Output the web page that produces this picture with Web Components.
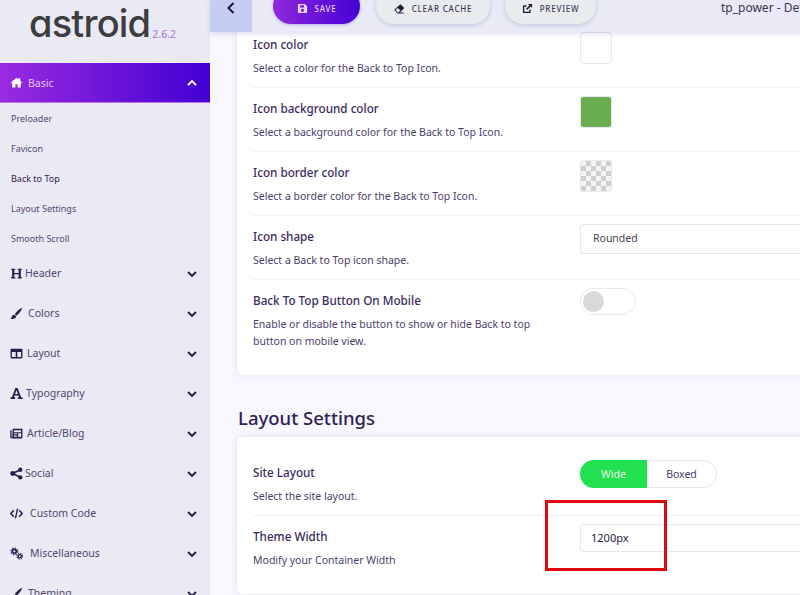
<!DOCTYPE html>
<html>
<head>
<meta charset="utf-8">
<title>astroid</title>
<style>
  html, body { margin: 0; height: 100%; overflow: hidden; }
  body { font-family: "Noto Sans", "Open Sans", sans-serif; color: #3a2a5c; }
</style>
</head>
<body>
<astroid-app>
  <side-nav slot="side">
    <nav-item icon="home" gap="5" active open>Basic</nav-item>
    <sub-item>Preloader</sub-item>
    <sub-item>Favicon</sub-item>
    <sub-item current>Back to Top</sub-item>
    <sub-item>Layout Settings</sub-item>
    <sub-item>Smooth Scroll</sub-item>
    <nav-item icon="heading" gap="2">Header</nav-item>
    <nav-item icon="brush" gap="5">Colors</nav-item>
    <nav-item icon="columns" gap="4">Layout</nav-item>
    <nav-item icon="font" gap="3">Typography</nav-item>
    <nav-item icon="news" gap="4">Article/Blog</nav-item>
    <nav-item icon="share" gap="2">Social</nav-item>
    <nav-item icon="code" gap="7">Custom Code</nav-item>
    <nav-item icon="cogs" gap="7">Miscellaneous</nav-item>
    <nav-item icon="brush" gap="5">Theming</nav-item>
  </side-nav>
  <top-bar slot="top">
    <tool-button icon="save" primary style="width:87px">SAVE</tool-button>
    <tool-button icon="eraser" style="width:114px;margin-left:16px">CLEAR CACHE</tool-button>
    <tool-button icon="external" style="width:91px;margin-left:15px">PREVIEW</tool-button>
    <span slot="title">tp_power - Default</span>
  </top-bar>
  <settings-card style="margin-top:-23px">
    <setting-row label="Icon color" desc="Select a color for the Back to Top Icon."><color-swatch color="#fff"></color-swatch></setting-row>
    <setting-row label="Icon background color" desc="Select a background color for the Back to Top Icon."><color-swatch color="#68ad4e"></color-swatch></setting-row>
    <setting-row label="Icon border color" desc="Select a border color for the Back to Top Icon."><color-swatch></color-swatch></setting-row>
    <setting-row label="Icon shape" desc="Select a Back to Top icon shape."><text-field h="30">Rounded</text-field></setting-row>
    <setting-row last label="Back To Top Button On Mobile" desc="Enable or disable the button to show or hide Back to top button on mobile view."><toggle-switch></toggle-switch></setting-row>
  </settings-card>
  <settings-card heading="Layout Settings" style="margin-top:30px">
    <setting-row label="Site Layout" desc="Select the site layout."><segment-pick></segment-pick></setting-row>
    <setting-row last label="Theme Width" desc="Modify your Container Width"><text-field h="28" dark>1200px</text-field></setting-row>
  </settings-card>
  <mark-box></mark-box>
</astroid-app>

<script>
const ICONS = {
  home: '<path d="M12 3 1 12.500h3V21h6v-6h4v6h6v-8.500h3L19 9V4h-3v2.300z"/>',
  heading: '<path d="M2 3h8v2.300H8V11h8V5.300h-2V3h8v2.300h-2v13.400h2V21h-8v-2.300h2V13.500H8v5.200h2V21H2v-2.300h2V5.300H2z"/>',
  brush: '<path d="M23 1.500C18 3.500 12 8.500 8.800 13l3.400 3C16.500 12.500 21.500 6.500 23 1.500z"/><path d="M7.500 14.500c-2.800.2-4 2-4.300 4-.2 1.300-1 2-2.700 2.500 3 1.800 10.500 2 11-4.300z"/>',
  columns: '<path fill-rule="evenodd" d="M3 3h18a2 2 0 0 1 2 2v14a2 2 0 0 1-2 2H3a2 2 0 0 1-2-2V5a2 2 0 0 1 2-2zm.5 6v9.500h7V9zm10 0v9.500h7V9z"/>',
  font: '<path fill-rule="evenodd" d="M10 2h4l6.500 17H23v3h-8.500v-3h2.200l-1.100-3.300H8.400L7.300 19h2.200v3H1v-3h2.500zM9.400 12.800h5.200L12 5.800z"/>',
  news: '<path fill-rule="evenodd" d="M5 3h18v16a2 2 0 0 1-2 2H3a2.500 2.500 0 0 1-2.500-2.500V6H3v12.500a.7.7 0 0 0 1.400 0zm2.500 3v3.500h13V6zm0 5.500v1.800h5.500v-1.800zm7.500 0V18h5.500v-6.500zm-7.500 3.500V18h5.500v-1.800z"/>',
  share: '<circle cx="19" cy="5" r="4"/><circle cx="19" cy="19" r="4"/><circle cx="5" cy="12" r="4.500"/><path d="M5 12 19 5M5 12l14 7" stroke="currentColor" stroke-width="3"/>',
  code: '<path d="M7 6 1.500 12 7 18M17 6l5.500 6-5.500 6" fill="none" stroke="currentColor" stroke-width="2.800"/><path d="M14 3 10 21" fill="none" stroke="currentColor" stroke-width="2.500"/>',
  cogs: '<circle cx="8" cy="8" r="3.600" fill="none" stroke="currentColor" stroke-width="3"/><circle cx="8" cy="8" r="6.200" fill="none" stroke="currentColor" stroke-width="2.200" stroke-dasharray="2.500 2.370"/><circle cx="18" cy="17" r="3" fill="none" stroke="currentColor" stroke-width="2.600"/><circle cx="18" cy="17" r="5.300" fill="none" stroke="currentColor" stroke-width="2" stroke-dasharray="2.200 2"/>',
  save: '<path fill-rule="evenodd" d="M4 2h13l5 5v13a2 2 0 0 1-2 2H4a2 2 0 0 1-2-2V4a2 2 0 0 1 2-2zm2.500 3v5h9V5zM12 12.500a3.500 3.500 0 1 0 0 7 3.500 3.500 0 0 0 0-7z"/>',
  eraser: '<path d="M14 2.500 22.500 11 13 20.500H21V23H8L1.500 16.500a2 2 0 0 1 0-2.800zM7.500 11l-4 4.500L8 20.500h2l4-4.500z"/>',
  external: '<path d="M13 2h9v9l-3.200-3.200-7.300 7.300-2.600-2.600 7.300-7.300z"/><path d="M4 5h6v3H5v11h11v-5h3v6a2 2 0 0 1-2 2H4a2 2 0 0 1-2-2V7a2 2 0 0 1 2-2z"/>'
};

// small helper, every element just sets its shadow html once
class Base extends HTMLElement {
  connectedCallback() {
    if (this.shadowRoot) return;
    this.attachShadow({ mode: 'open' });
    this.shadowRoot.innerHTML = this.html();
  }
}

class UiIcon extends Base {
  html() {
    const size = this.getAttribute('size') || 13;
    return `<style>:host{display:inline-flex;color:inherit}svg{display:block;fill:currentColor}</style>
      <svg width="${size}" height="${size}" viewBox="0 0 24 24">${ICONS[this.getAttribute('name')] || ''}</svg>`;
  }
}

class AstroidApp extends Base {
  html() {
    return `<style>
      :host{display:grid;grid-template-columns:210px 1fr;grid-template-rows:32px 1fr;width:800px;height:595px;overflow:hidden;position:relative;background:#f9f7fe}
      .side{grid-row:1 / 3}
      .top{grid-column:2;z-index:2}
      .main{grid-column:2;padding:0 0 0 27px;width:600px;box-sizing:border-box}
      .scroll{width:700px}
    </style>
    <div class="side"><slot name="side"></slot></div>
    <div class="top"><slot name="top"></slot></div>
    <div class="main"><div class="scroll"><slot></slot></div></div>`;
  }
}

class SideNav extends Base {
  html() {
    return `<style>
      :host{display:block;height:595px;background:#e9eaf3;overflow:hidden}
      .logo{height:63px;box-sizing:border-box;padding:0 0 0 29px;display:flex;align-items:flex-start;overflow:hidden}
      .name{font:500 38px/46px Inter,"Noto Sans",sans-serif;font-feature-settings:"cv11";color:#3d3d3f;letter-spacing:-.8px}
      .ver{font:500 10.500px/12px "Noto Sans",sans-serif;color:#b07fe0;margin:28px 0 0 2px}
    </style>
    <div class="logo"><span class="name">astroid</span><span class="ver">2.6.2</span></div>
    <slot></slot>`;
  }
}

class NavItem extends Base {
  html() {
    const active = this.hasAttribute('active');
    const chev = this.hasAttribute('open') ? 'M2 8 6 4l4 4' : 'M2 4l4 4 4-4';
    return `<style>
      :host{display:flex;align-items:center;height:40px;box-sizing:border-box;padding:0 12px 0 10px;font-size:10.500px;color:#54466f;
        ${active ? 'background:linear-gradient(90deg,#9a2be0,#4200d2);color:#e3c6f7;border-bottom:1px solid #c070e6;' : ''}}
      .ic{color:${active ? '#fff' : '#2c1b4d'};display:flex;margin-right:${this.getAttribute('gap') || 5}px}
      .t{flex:1;margin-top:${active ? 0 : -1}px}
      svg{display:block;margin-top:1px}
    </style>
    <span class="ic"><ui-icon name="${this.getAttribute('icon')}" size="13"></ui-icon></span>
    <span class="t"><slot></slot></span>
    <svg width="12" height="12" viewBox="0 0 12 12" fill="none" stroke="${active ? '#fff' : '#2c1b4d'}" stroke-width="1.900"><path d="${chev}"/></svg>`;
  }
}

class SubItem extends Base {
  html() {
    const cur = this.hasAttribute('current');
    return `<style>:host{display:flex;align-items:center;height:30px;padding-left:11px;font-size:9px;color:${cur ? '#2f2347' : '#54466f'}}</style><slot></slot>`;
  }
}

class TopBar extends Base {
  html() {
    return `<style>
      :host{display:flex;align-items:flex-end;height:32px;background:#e9eaf5;box-shadow:0 2px 5px rgba(120,120,200,.22);overflow:hidden}
      .back{width:42px;height:32px;background:#c5cdf2;display:flex;align-items:flex-start;justify-content:center;align-self:flex-start;color:#1e1436}
      .back svg{margin-top:1px}
      .btns{display:flex;margin-left:21px;align-self:flex-start;margin-top:-12px}
      .title{margin-left:125px;align-self:flex-start;font-size:12px;line-height:16px;white-space:nowrap;color:#3a3450;flex:none}
    </style>
    <div class="back"><svg width="14" height="14" viewBox="0 0 14 14" fill="none" stroke="currentColor" stroke-width="2"><path d="M9.500 2 4.500 7l5 5"/></svg></div>
    <div class="btns"><slot></slot></div>
    <div class="title"><slot name="title"></slot></div>`;
  }
}

class ToolButton extends Base {
  html() {
    const p = this.hasAttribute('primary');
    return `<style>
      :host{display:flex;align-items:center;justify-content:center;height:36px;box-sizing:border-box;padding-top:4px;border-radius:18px;font-size:8px;letter-spacing:.8px;font-weight:500;
        ${p ? 'background:linear-gradient(90deg,#8f28dc,#4500d4);color:#e8d4fa;box-shadow:0 1px 3px rgba(80,20,200,.3);'
            : 'background:#e9ecef;color:#3f3a58;box-shadow:0 1px 4px rgba(110,110,170,.35);'}}
      .ic{display:flex;margin-right:7px;color:${p ? '#e8d4fa' : '#241a3c'}}
    </style>
    <span class="ic"><ui-icon name="${this.getAttribute('icon')}" size="11"></ui-icon></span><slot></slot>`;
  }
}

class SettingsCard extends Base {
  html() {
    const h = this.getAttribute('heading');
    return `<style>
      :host{display:block}
      h2{margin:0 0 6px 1px;font:500 18.500px/26px "Noto Sans",sans-serif;color:#2f1f55}
      .card{background:#fff;border-radius:5px;box-shadow:0 0 7px rgba(120,90,220,.16);padding:15px 16px 25px}
    </style>
    ${h ? `<h2>${h}</h2>` : ''}
    <div class="card"><slot></slot></div>`;
  }
}

class SettingRow extends Base {
  html() {
    const last = this.hasAttribute('last');
    return `<style>
      :host{display:grid;grid-template-columns:327px 1fr;box-sizing:border-box;${last ? '' : 'height:64px;border-bottom:1px solid #f1f0f6;'}}
      .txt{padding-top:8px}
      .l{font-size:11.700px;line-height:24px;font-weight:500;color:#3b2a5e}
      .d{font-size:10.500px;line-height:17px;margin-top:4px;color:#4b3d6b;max-width:290px}
      .c{padding-top:8px}
    </style>
    <div class="txt"><div class="l">${this.getAttribute('label')}</div><div class="d">${this.getAttribute('desc')}</div></div>
    <div class="c"><slot></slot></div>`;
  }
}

class ColorSwatch extends Base {
  html() {
    const c = this.getAttribute('color');
    const bg = c ? `background:${c}` : 'background:repeating-conic-gradient(#cfcfcf 0 25%,#f4f4f4 0 50%) 0 0/10px 10px';
    return `<style>:host{display:block;width:32px;height:32px;box-sizing:border-box;border:1px solid #e8e8ee;border-radius:3px;${bg}}</style>`;
  }
}

class TextField extends Base {
  html() {
    const dark = this.hasAttribute('dark');
    return `<style>:host{display:flex;align-items:center;width:300px;height:${this.getAttribute('h')}px;box-sizing:border-box;border:1px solid #e6e6ec;border-radius:3px;padding:0 0 2px ${dark ? 10 : 12}px;font-size:${dark ? 11 : 10.5}px;background:#fff;color:${dark ? '#26213a' : '#46424f'}}</style><slot></slot>`;
  }
}

class ToggleSwitch extends Base {
  html() {
    return `<style>
      :host{display:block;width:56px;height:27px;box-sizing:border-box;border:1px solid #e9e9ee;border-radius:14px;background:#fff;padding:2px}
      i{display:block;width:21px;height:21px;border-radius:50%;background:#d9d9dc}
    </style><i></i>`;
  }
}

class SegmentPick extends Base {
  html() {
    return `<style>
      :host{display:flex;width:137px;height:28px;font-size:10.500px}
      span{display:flex;align-items:center;justify-content:center;box-sizing:border-box}
      .on{width:67px;background:#22e04f;color:#e8fbe9;border-radius:14px 0 0 14px}
      .off{width:70px;border:1px solid #e6e6ec;border-left:0;border-radius:0 14px 14px 0;color:#4b3d6b;background:#fff}
    </style><span class="on">Wide</span><span class="off">Boxed</span>`;
  }
}

// annotation drawn on top of the shot
class MarkBox extends Base {
  html() {
    return `<style>:host{position:absolute;left:545px;top:500px;width:122px;height:71px;box-sizing:border-box;border:3px solid #e0060d;z-index:3}</style>`;
  }
}

customElements.define('ui-icon', UiIcon);
customElements.define('astroid-app', AstroidApp);
customElements.define('side-nav', SideNav);
customElements.define('nav-item', NavItem);
customElements.define('sub-item', SubItem);
customElements.define('top-bar', TopBar);
customElements.define('tool-button', ToolButton);
customElements.define('settings-card', SettingsCard);
customElements.define('setting-row', SettingRow);
customElements.define('color-swatch', ColorSwatch);
customElements.define('text-field', TextField);
customElements.define('toggle-switch', ToggleSwitch);
customElements.define('segment-pick', SegmentPick);
customElements.define('mark-box', MarkBox);
</script>
</body>
</html>
